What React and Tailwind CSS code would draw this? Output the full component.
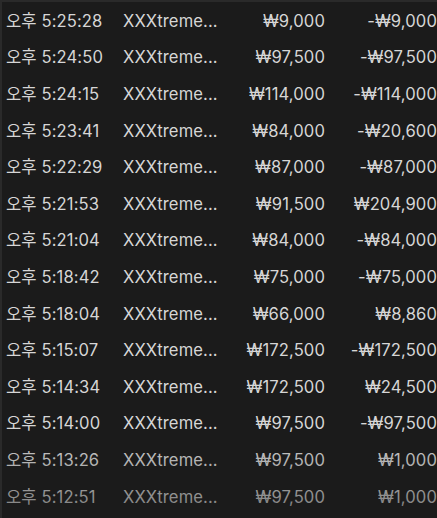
const ROWS = [
  ["오후 5:25:28", "₩9,000", "-₩9,000"],
  ["오후 5:24:50", "₩97,500", "-₩97,500"],
  ["오후 5:24:15", "₩114,000", "-₩114,000"],
  ["오후 5:23:41", "₩84,000", "-₩20,600"],
  ["오후 5:22:29", "₩87,000", "-₩87,000"],
  ["오후 5:21:53", "₩91,500", "₩204,900"],
  ["오후 5:21:04", "₩84,000", "-₩84,000"],
  ["오후 5:18:42", "₩75,000", "-₩75,000"],
  ["오후 5:18:04", "₩66,000", "₩8,860"],
  ["오후 5:15:07", "₩172,500", "-₩172,500"],
  ["오후 5:14:34", "₩172,500", "₩24,500"],
  ["오후 5:14:00", "₩97,500", "-₩97,500"],
  ["오후 5:13:26", "₩97,500", "₩1,000"],
  ["오후 5:12:51", "₩97,500", "₩1,000"],
];

export default function App() {
  return (
    <div
      className="relative w-[437px] h-[518px] overflow-hidden bg-[#1b1b1b] border-t-2 border-l-2 border-[#2a2a2a] pt-[1px] text-[#d6d6d6] text-[16.6px] tracking-[0.1px]"
      style={{ fontFamily: "Inter, 'Noto Sans CJK KR', sans-serif" }}
    >
      {ROWS.map(([time, amount, diff], i) => (
        <div
          key={i}
          className="grid grid-cols-[117px_100px_102px_112px] items-center h-[36.6px] pl-[4px] whitespace-nowrap"
        >
          <span>{time}</span>
          <span>XXXtreme...</span>
          <span className="text-right">{amount}</span>
          <span className="text-right">{diff}</span>
        </div>
      ))}
      {/* bottom fade */}
      <div className="absolute left-0 right-0 bottom-0 h-[90px] pointer-events-none bg-gradient-to-b from-[#1b1b1b00] to-[#1b1b1b80]" />
    </div>
  );
}
